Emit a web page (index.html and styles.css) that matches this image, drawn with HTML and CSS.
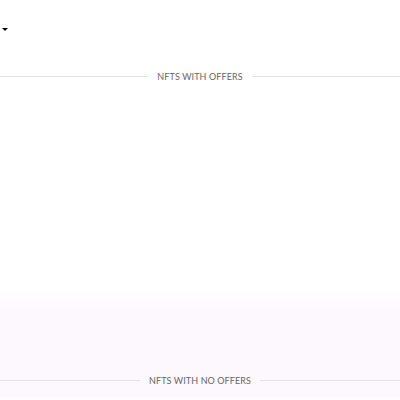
FILE: index.html
```html
<!DOCTYPE html>
<html>
<head>
    <title>My NFTs</title>
    <link rel="stylesheet" href="styles.css">
</head>
<body>
    <div class="toolbar">
        <span class="caret"></span>
    </div>

    <div class="section">
        <div class="divider"><span>NFTS WITH OFFERS</span></div>
        <div class="grid"></div>
    </div>

    <div class="section section-alt">
        <div class="divider"><span>NFTS WITH NO OFFERS</span></div>
    </div>
</body>
</html>
```
FILE: styles.css
```css
body { margin: 0; font-family: Lato, "Open Sans", sans-serif; background: #fff; color: #555; }
.toolbar { height: 28px; padding: 0 2px; display: flex; align-items: flex-end; }
.caret { width: 0; height: 0; border-left: 3px solid transparent; border-right: 3px solid transparent; border-top: 3px solid #000; margin-bottom: -3px; }
.section { padding-top: 43px; }
.divider { display: flex; align-items: center; gap: 9px; font-size: 9px; letter-spacing: 0.1px; color: #666; }
.divider::before, .divider::after { content: ""; flex: 1; height: 1px; background: #e6e2e6; }
.grid { height: 206px; }
.section-alt { padding-top: 87px; background: linear-gradient(#fff, #fdf8fd 20px); height: 23px; }
```
